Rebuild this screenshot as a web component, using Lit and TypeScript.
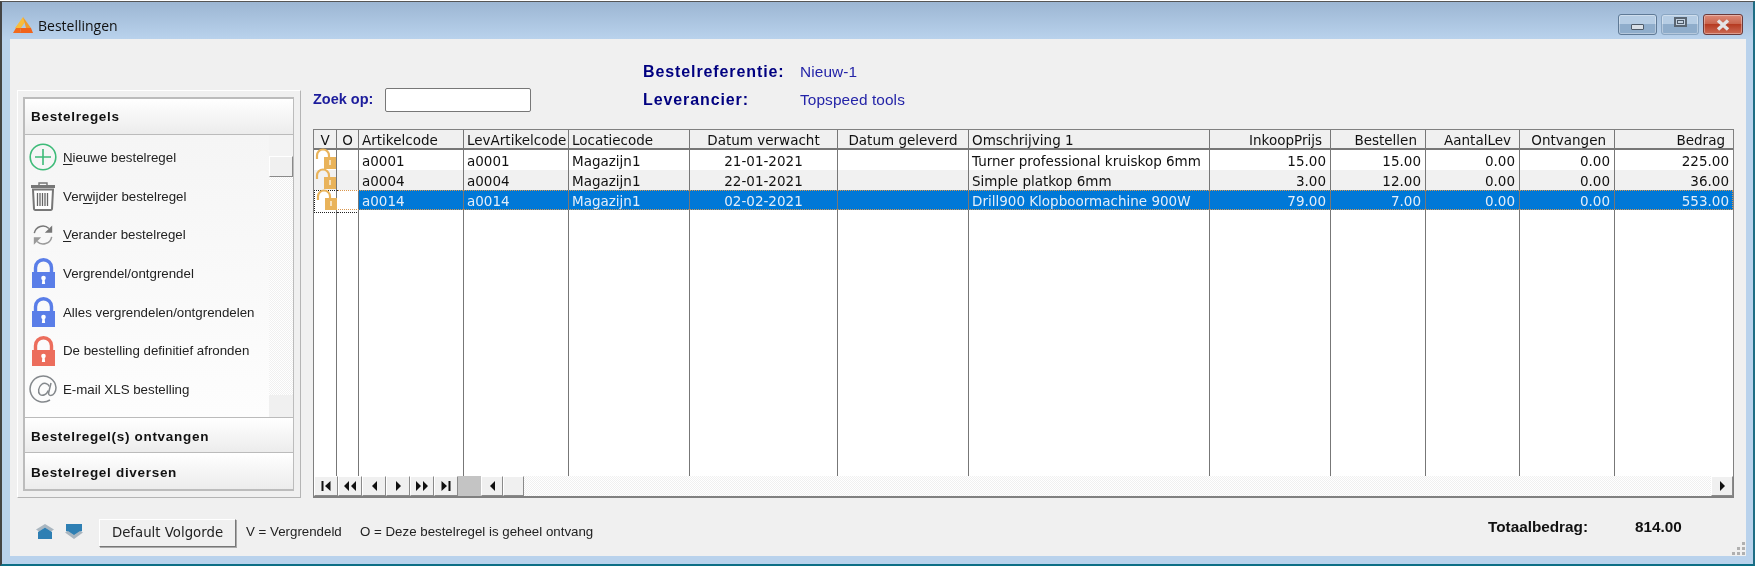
import { LitElement, html, css, svg } from "lit";
import { customElement } from "lit/decorators.js";

const lock = (c: string) => svg`<svg width="23" height="30" viewBox="0 0 23 30"><path d="M3.500 15V9.700a8 8 0 0 1 16 0V15" fill="none" stroke="${c}" stroke-width="3.400"/><path d="M0 14h23v16H0z" fill="${c}"/><circle cx="11.500" cy="20" r="2.300" fill="#fff"/><path d="M10.400 20.500h2.200l.5 5.500h-3.200z" fill="#fff"/></svg>`;
const openLock = svg`<svg class="ol" width="23" height="22" viewBox="0 0 23 22"><path d="M3 11V7.500a6 6 0 0 1 12 0V9" fill="none" stroke="#e9b35a" stroke-width="2.200"/><path d="M10 9h12v12H10z" fill="#e9b35a"/><path d="M15 12h2v5h-2z" fill="#fff" opacity=".6"/></svg>`;

const rows = [
  ["a0001", "a0001", "Magazijn1", "21-01-2021", "", "Turner professional kruiskop 6mm", "15.00", "15.00", "0.00", "0.00", "225.00"],
  ["a0004", "a0004", "Magazijn1", "22-01-2021", "", "Simple platkop 6mm", "3.00", "12.00", "0.00", "0.00", "36.00"],
  ["a0014", "a0014", "Magazijn1", "02-02-2021", "", "Drill900 Klopboormachine 900W", "79.00", "7.00", "0.00", "0.00", "553.00"],
];
const heads: [string, string][] = [
  ["V", "c"], ["O", "c"], ["Artikelcode", "l"], ["LevArtikelcode", "l"], ["Locatiecode", "l"],
  ["Datum verwacht", "c"], ["Datum geleverd", "c"], ["Omschrijving 1", "l"],
  ["InkoopPrijs", "r"], ["Bestellen", "r"], ["AantalLev", "r"], ["Ontvangen", "r"], ["Bedrag", "r"],
];
const align = ["l", "l", "l", "c", "c", "l", "r", "r", "r", "r", "r"];

@customElement("app-root")
export class AppRoot extends LitElement {
  static styles = css`
    :host { display: block; width: 1755px; height: 566px; overflow: hidden; font-family: "DejaVu Sans", sans-serif; color: #111; background: #fff; }
    * { box-sizing: border-box; }
    .win { width: 1755px; height: 565px; margin-top: 1px; display: flex; flex-direction: column; background: #b9d2ec; border-top: 1px solid #555; border-bottom: 2px solid #0d6f86; border-right: 2px solid #1e6d84; border-left: 2px solid #444; filter: blur(.3px); }
    .title { height: 37px; flex: none; display: flex; align-items: center; padding: 8px 10px 0 11px; background: linear-gradient(#9cb6d3, #b9d2ec); font: 14px "Open Sans", sans-serif; color: #111; }
    .title .t { margin-left: 5px; margin-top: 1px; }
    .btns { margin-left: auto; display: flex; gap: 4px; margin-bottom: 0; }
    .wb { width: 39px; height: 21px; border: 1px solid #5f7a96; border-radius: 3px; display: flex; align-items: center; justify-content: center; background: linear-gradient(#b6cde4 0 48%, #8fadcb 50% 100%); box-shadow: inset 0 0 0 1px rgba(255,255,255,.35); }
    .wb.mx { width: 38px; border-color: #8aa6c2; }
    .wb.cl { width: 40px; border-color: #6b3a3a; background: linear-gradient(#dd8a78 0, #c9664f 45%, #b63b22 50%, #cc6b55 100%); }
    .wb i { display: block; }
    .mn { width: 13px; height: 6px; margin-top: 5px; background: #d8dfe6; border: 1px solid #4d5a68; border-radius: 1px; }
    .mxi { width: 13px; height: 10px; border: 2px solid #5a6672; background: #c4d2e0; margin-bottom: 6px; position: relative; }
    .mxi::after { content: ""; position: absolute; inset: 1px; border: 1px solid #4d5a68; }
    .client { flex: 1; margin: 0 7px 8px 8px; background: #f0f0f0; display: flex; flex-direction: column; padding: 19px 0 0 7px; }
    .main { display: flex; gap: 12px; flex: none; }
    .panel { width: 284px; flex: none; height: 408px; margin-top: 32px; padding: 6px 6px 6px 5px; border: 1px solid; border-color: #fff #b4b4b4 #b4b4b4 #fff; }
    .acc { height: 100%; border: 2px solid #bcbcbc; border-right-width: 1px; display: flex; flex-direction: column; background: #fafafa; }
    .hd { flex: none; height: 36px; display: flex; align-items: center; padding: 0 0 0 6px; font: bold 13.5px "Liberation Sans", sans-serif; letter-spacing: .7px; background: linear-gradient(#fff, #ececec); border-bottom: 1px solid #bbb; color: #111; }
    .hd.mid { border-top: 1px solid #bbb; padding-top: 2px; }
    .hd.last { border-bottom: 0; padding-top: 2px; }
    .list { flex: 1; display: flex; min-height: 0; }
    .items { flex: 1; padding: 3px 0 0 0; display: grid; grid-auto-rows: 38.7px; align-content: start; background: linear-gradient(#f5f5f5, #fdfdfd); }
    .it { display: flex; align-items: center; font: 13.3px "Liberation Sans", sans-serif; color: #222; }
    .ib { width: 36px; flex: none; display: flex; justify-content: center; margin-right: 2px; }
    .it u { text-underline-offset: 2px; }
    .sb { width: 24px; flex: none; display: flex; flex-direction: column; background: repeating-conic-gradient(#fff 0 25%, #f0f0f0 0 50%) 0 0 / 2px 2px; }
    .sb .gap { height: 21px; flex: none; background: #f3f3f3; }
    .thumb { height: 21px; flex: none; background: #f0f0f0; border: 1px solid; border-color: #fff #8a8a8a #8a8a8a #fff; }
    .sb .tr { flex: 1; }
    .sb .end { height: 22px; flex: none; background: #f0f0f0; }
    .right { flex: 1; min-width: 0; padding-right: 12px; display: flex; flex-direction: column; }
    .top { height: 71px; flex: none; display: flex; }
    .zoek { width: 330px; flex: none; display: flex; align-items: flex-start; padding-top: 31px; }
    .zl { font: bold 14.5px/20px "Liberation Sans", sans-serif; color: #1c1c9c; width: 72px; }
    .inp { width: 146px; height: 24px; margin-top: -1px; background: #fff; border: 1px solid #777; border-radius: 2px; }
    .info { display: grid; grid-template-columns: 157px auto; grid-auto-rows: 28px; align-items: center; }
    .info b { font: bold 16px "Liberation Sans", sans-serif; color: #000080; letter-spacing: .9px; }
    .info span { font: 15.4px "Liberation Sans", sans-serif; color: #2424a8; letter-spacing: .1px; }
    .grid { height: 369px; border: 1px solid #808080; border-bottom-width: 2px; display: flex; flex-direction: column; background: #fff; font: 13.5px "DejaVu Sans", sans-serif; }
    .r { display: grid; grid-template-columns: 23px 22px 105px 105px 121px 148px 131px 241px 121px 95px 94px 95px 118px; flex: none; }
    .r > div { border-right: 1px solid #777; padding: 0 3px; white-space: nowrap; line-height: 23px; height: 100%; overflow: visible; }
    .r > div:last-child { border-right: 0; }
    .r .c { text-align: center; }
    .r .r-a { text-align: right; padding-right: 4px; }
    .rh { height: 20px; background: #f0f0f0; border-bottom: 2px solid #777; }
    .rh > div { line-height: 21px; }
    .rh .r-a { padding-right: 8px; }
    .rd { height: 20px; }
    .rd.alt { background: #f1f1f1; }
    .rd.sel { background: #0078d7; color: #e2eefa; outline: 1px dotted #d9964c; outline-offset: -1px; }
    .rd.sel > div:nth-child(-n+2) { background: #fff; border-top: 1px dotted #222; border-bottom: 1px dotted #222; }
    .rd.sel > div:first-child { border-left: 1px dotted #222; }
    .lk { position: relative; padding: 0 !important; }
    .ol { position: absolute; left: 0; top: -2px; }
    .fill { flex: 1; min-height: 0; }
    .hs { height: 20px; flex: none; display: flex; background: repeating-conic-gradient(#fff 0 25%, #f0f0f0 0 50%) 0 0 / 2px 2px; }
    .nb { width: 24px; flex: none; background: #f0f0f0; border: 1px solid; border-color: #fff #8a8a8a #8a8a8a #fff; display: flex; align-items: center; justify-content: center; }
    .gr { width: 23px; flex: none; background: #c4c4c4; }
    .hs .sp { flex: 1; }
    .hs .nb.s { width: 22px; }
    .hs .nb.t { width: 21px; }
    .foot { flex: 1; display: flex; align-items: flex-start; padding: 21px 0 0 19px; position: relative; font: 13.3px "Liberation Sans", sans-serif; color: #222; }
    .arr { display: flex; gap: 11px; margin-top: 5px; width: 63px; flex: none; }
    .dv { width: 137px; height: 28px; flex: none; background: #f0f0f0; border: 1px solid; border-color: #fff #777 #777 #fff; box-shadow: 1px 1px 0 #aaa; font: 13.3px/26px "DejaVu Sans", sans-serif; text-align: center; color: #222; }
    .lg { margin: 5px 0 0 10px; width: 114px; flex: none; line-height: 15px; }
    .lg2 { margin: 5px 0 0 0; line-height: 15px; }
    .tot { margin-left: auto; display: flex; font: bold 15.3px/18px "Liberation Sans", sans-serif; color: #111; margin-top: -1px; width: 258px; }
    .tot b:first-child { width: 147px; }
    .grip { position: absolute; right: 0; bottom: 0; }
  `;

  render() {
    return html`<div class="win">
      <div class="title">
        <svg width="20" height="18" viewBox="0 0 20 18"><path d="M10 1 2 12h6l4-6z" fill="#f7bd3c"/><path d="M10 1l8 11h-5z" fill="#f09a2c"/><path d="M0 17l3-5h5l-1 5z" fill="#f26a1b"/><path d="M8 12h10l2 5H7z" fill="#f0641c"/></svg>
        <span class="t">Bestellingen</span>
        <div class="btns">
          <div class="wb"><i class="mn"></i></div>
          <div class="wb mx"><i class="mxi"></i></div>
          <div class="wb cl"><svg width="16" height="12" viewBox="0 0 16 12"><path d="M3 1.500 13 10.500M13 1.500 3 10.500" stroke="#e4e4e6" stroke-width="3.400"/></svg></div>
        </div>
      </div>
      <div class="client">
        <div class="main">
          <div class="panel"><div class="acc">
            <div class="hd">Bestelregels</div>
            <div class="list">
              <div class="items">
                <div class="it"><span class="ib"><svg width="28" height="28" viewBox="0 0 28 28"><circle cx="14" cy="14" r="12.800" fill="none" stroke="#3dbb78" stroke-width="1.600"/><path d="M14 6v16M6 14h16" stroke="#3dbb78" stroke-width="1.600"/></svg></span><span><u>N</u>ieuwe bestelregel</span></div>
                <div class="it"><span class="ib"><svg width="24" height="29" viewBox="0 0 24 29"><path d="M8 3V1h8v2" fill="none" stroke="#777" stroke-width="1.400"/><path d="M0 3h24v3H0z" fill="#777"/><path d="M2 7.500h20l-1 19.500a1.500 1.500 0 0 1-1.500 1h-15a1.500 1.500 0 0 1-1.500-1z" fill="#fff" stroke="#777" stroke-width="2"/><path d="M6.500 11v13M9 11v13M11.500 11v13M14 11v13M16.500 11v13" stroke="#666" stroke-width="1.300"/></svg></span><span>Ver<u>w</u>ijder bestelregel</span></div>
                <div class="it"><span class="ib"><svg width="22" height="22" viewBox="0 0 24 24"><path d="M2.500 10A9.500 9.500 0 0 1 18.500 5" fill="none" stroke="#777" stroke-width="1.600"/><path d="M22 1.500v8h-8z" fill="#777"/><path d="M21.500 14A9.500 9.500 0 0 1 5.500 19" fill="none" stroke="#9a9a9a" stroke-width="1.600"/><path d="M2 22.500v-8h8z" fill="#9a9a9a"/></svg></span><span><u>V</u>erander bestelregel</span></div>
                <div class="it"><span class="ib">${lock("#5a7ee8")}</span><span>Vergrendel/ontgrendel</span></div>
                <div class="it"><span class="ib">${lock("#5a7ee8")}</span><span>Alles vergrendelen/ontgrendelen</span></div>
                <div class="it"><span class="ib">${lock("#ec6d5c")}</span><span>De bestelling definitief afronden</span></div>
                <div class="it"><span class="ib"><svg width="28" height="28" viewBox="0 0 28 28" fill="none" stroke="#84888c" stroke-width="1.500"><path d="M21 25A13 13 0 1 1 27 12.500C27 17 24.500 20.500 21.800 20.500C19.800 20.500 19.300 19 19.800 17L22 8"/><path d="M20.300 11.500C19 8 15 7.500 12.500 9.500C9.500 12 8.500 17 11 19.500C13.500 21.500 17.800 19.500 19.300 15.500"/></svg></span><span>E-mail XLS bestelling</span></div>
              </div>
              <div class="sb"><div class="gap"></div><div class="thumb"></div><div class="tr"></div><div class="end"></div></div>
            </div>
            <div class="hd mid">Bestelregel(s) ontvangen</div>
            <div class="hd last">Bestelregel diversen</div>
          </div></div>
          <div class="right">
            <div class="top">
              <div class="zoek"><span class="zl">Zoek op:</span><div class="inp"></div></div>
              <div class="info">
                <b>Bestelreferentie:</b><span>Nieuw-1</span>
                <b>Leverancier:</b><span>Topspeed tools</span>
              </div>
            </div>
            <div class="grid">
              <div class="r rh">${heads.map(([t, a]) => html`<div class="${a === "c" ? "c" : a === "r" ? "r-a" : ""}">${t}</div>`)}</div>
              ${rows.map((r, i) => html`<div class="r rd ${i === 1 ? "alt" : ""} ${i === 2 ? "sel" : ""}">
                <div class="lk">${openLock}</div><div></div>
                ${r.map((v, j) => html`<div class="${align[j] === "c" ? "c" : align[j] === "r" ? "r-a" : ""}">${v}</div>`)}
              </div>`)}
              <div class="r fill">${heads.map(() => html`<div></div>`)}</div>
              <div class="hs">
                <div class="nb"><svg width="12" height="10" viewBox="0 0 12 10"><path d="M1.500 0h2v10h-2zM10.500 0v10L5 5z" fill="#111"/></svg></div>
                <div class="nb"><svg width="14" height="10" viewBox="0 0 14 10"><path d="M6 0v10L1 5zM13 0v10L8 5z" fill="#111"/></svg></div>
                <div class="nb"><svg width="7" height="10" viewBox="0 0 7 10"><path d="M6 0v10L1 5z" fill="#111"/></svg></div>
                <div class="nb"><svg width="7" height="10" viewBox="0 0 7 10"><path d="M1 0v10l5-5z" fill="#111"/></svg></div>
                <div class="nb"><svg width="14" height="10" viewBox="0 0 14 10"><path d="M1 0v10l5-5zM8 0v10l5-5z" fill="#111"/></svg></div>
                <div class="nb"><svg width="12" height="10" viewBox="0 0 12 10"><path d="M1.500 0v10L7 5zM8.500 0h2v10h-2z" fill="#111"/></svg></div>
                <div class="gr"></div>
                <div class="nb s"><svg width="7" height="10" viewBox="0 0 7 10"><path d="M6 0v10L1 5z" fill="#111"/></svg></div>
                <div class="nb t"></div>
                <div class="sp"></div>
                <div class="nb s"><svg width="7" height="10" viewBox="0 0 7 10"><path d="M1 0v10l5-5z" fill="#111"/></svg></div>
              </div>
            </div>
          </div>
        </div>
        <div class="foot">
          <div class="arr">
            <svg width="18" height="15" viewBox="0 0 18 15"><path d="M9 0 18 5.500 15 7.500 9 3.500 3 7.500 0 5.500z" fill="#a9b6c0"/><path d="M9 3.500 16 8V15H2V8z" fill="#2e7fb3"/></svg>
            <svg width="18" height="15" viewBox="0 0 18 15"><path d="M1 0H17V7L9 11.500 1 7z" fill="#2e7fb3"/><path d="M0 8.500 3 7 9 11 15 7 18 8.500 9 15z" fill="#a9b6c0"/></svg>
          </div>
          <div class="dv">Default Volgorde</div>
          <div class="lg">V = Vergrendeld</div>
          <div class="lg2">O = Deze bestelregel is geheel ontvang</div>
          <div class="tot"><b>Totaalbedrag:</b><b>814.00</b></div>
          <svg class="grip" width="15" height="15" viewBox="0 0 15 15" fill="#b0b0b0"><path d="M11 1h3v3h-3zM6 6h3v3H6zM11 6h3v3h-3zM1 11h3v3H1zM6 11h3v3H6zM11 11h3v3h-3z"/></svg>
        </div>
      </div>
    </div>`;
  }
}
